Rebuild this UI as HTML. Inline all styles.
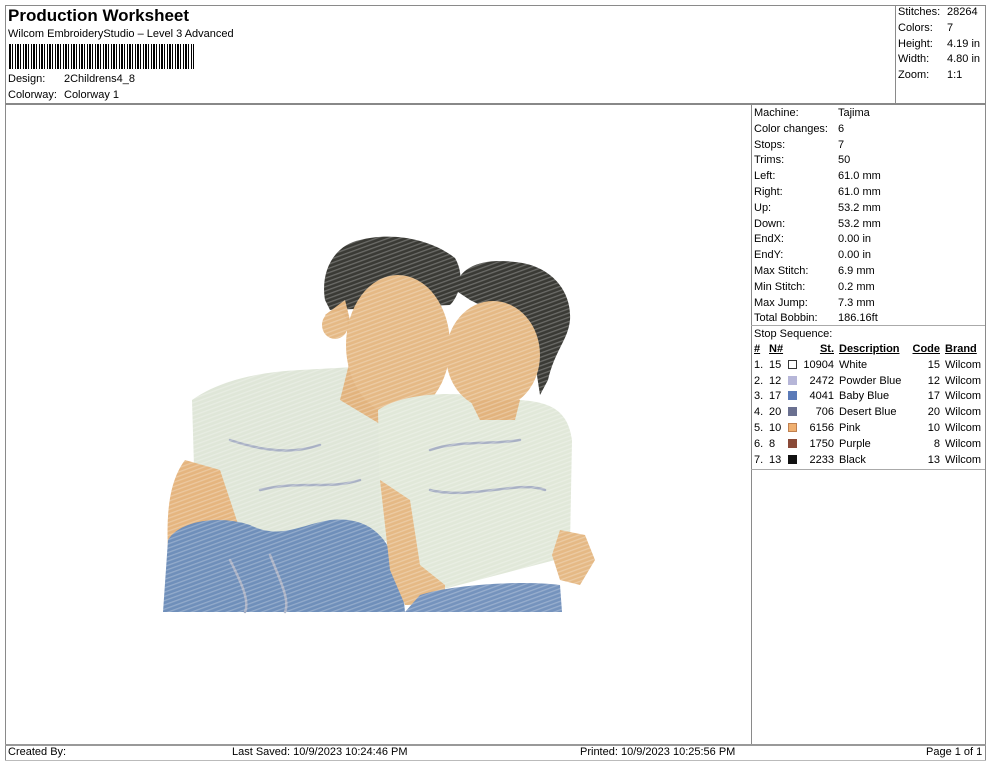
<!DOCTYPE html>
<html><head><meta charset="utf-8"><style>
*{margin:0;padding:0;box-sizing:border-box}
body{width:990px;height:762px;background:#fff;font-family:"Liberation Sans",Arial,sans-serif;font-size:11px;color:#000;position:relative;overflow:hidden}
.a{position:absolute;white-space:nowrap}
.l{position:absolute;background:#8a8a8a}
.r{position:absolute;line-height:15.8px}
u{text-decoration:underline;font-weight:bold}
.sw{display:inline-block;width:9px;height:9px;vertical-align:-1px}
</style></head><body>
<div class="l" style="left:5px;top:5px;width:981px;height:1px"></div>
<div class="l" style="left:5px;top:5px;width:1px;height:756px"></div>
<div class="l" style="left:985px;top:5px;width:1px;height:756px"></div>
<div class="l" style="left:5px;top:103px;width:981px;height:2px;background:#888"></div>
<div class="l" style="left:895px;top:5px;width:1px;height:98px"></div>
<div class="l" style="left:751px;top:104px;width:1px;height:641px"></div>
<div class="l" style="left:751px;top:325px;width:234px;height:1px;background:#aaa"></div>
<div class="l" style="left:751px;top:469px;width:234px;height:1px;background:#aaa"></div>
<div class="l" style="left:5px;top:744px;width:981px;height:2px;background:#999"></div>
<div class="l" style="left:5px;top:760px;width:981px;height:1px;background:#bbb"></div>

<div class="a" style="left:8px;top:6px;font-size:17px;font-weight:bold">Production Worksheet</div>
<div class="a" style="left:8px;top:28px">Wilcom EmbroideryStudio – Level 3 Advanced</div>
<div class="a" style="left:9px;top:44px;width:185px;height:25px;background:repeating-linear-gradient(90deg,#000 0 2px,#fff 2px 3px,#000 3px 4px,#fff 4px 6px,#000 6px 7px,#fff 7px 8px)"></div>
<div class="a" style="left:8px;top:73px">Design:</div><div class="a" style="left:64px;top:73px">2Childrens4_8</div>
<div class="a" style="left:8px;top:89px">Colorway:</div><div class="a" style="left:64px;top:89px">Colorway 1</div>

<div class="r" style="left:898px;top:5px">Stitches:<br>Colors:<br>Height:<br>Width:<br>Zoom:</div>
<div class="r" style="left:947px;top:5px">28264<br>7<br>4.19 in<br>4.80 in<br>1:1</div>

<div class="r" style="left:754px;top:106px">Machine:<br>Color changes:<br>Stops:<br>Trims:<br>Left:<br>Right:<br>Up:<br>Down:<br>EndX:<br>EndY:<br>Max Stitch:<br>Min Stitch:<br>Max Jump:<br>Total Bobbin:<br>Stop Sequence:</div>
<div class="r" style="left:838px;top:106px">Tajima<br>6<br>7<br>50<br>61.0 mm<br>61.0 mm<br>53.2 mm<br>53.2 mm<br>0.00 in<br>0.00 in<br>6.9 mm<br>0.2 mm<br>7.3 mm<br>186.16ft</div>

<div class="r" style="left:754px;top:342px">
<u>#</u><br>1.<br>2.<br>3.<br>4.<br>5.<br>6.<br>7.</div>
<div class="r" style="left:769px;top:342px"><u>N#</u><br>15<br>12<br>17<br>20<br>10<br>8<br>13</div>
<div class="r" style="left:788px;top:342px"><br>
<span class="sw" style="border:1px solid #333;background:#fff"></span><br>
<span class="sw" style="background:#b6b6d8"></span><br>
<span class="sw" style="background:#5a7ab8"></span><br>
<span class="sw" style="background:#6a7090"></span><br>
<span class="sw" style="background:#f0b070;border:1px solid #c08050"></span><br>
<span class="sw" style="background:#8a4a38"></span><br>
<span class="sw" style="background:#111"></span></div>
<div class="r" style="left:798px;top:342px;width:36px;text-align:right"><u>St.</u><br>10904<br>2472<br>4041<br>706<br>6156<br>1750<br>2233</div>
<div class="r" style="left:839px;top:342px"><u>Description</u><br>White<br>Powder Blue<br>Baby Blue<br>Desert Blue<br>Pink<br>Purple<br>Black</div>
<div class="r" style="left:908px;top:342px;width:32px;text-align:right"><u>Code</u><br>15<br>12<br>17<br>20<br>10<br>8<br>13</div>
<div class="r" style="left:945px;top:342px"><u>Brand</u><br>Wilcom<br>Wilcom<br>Wilcom<br>Wilcom<br>Wilcom<br>Wilcom<br>Wilcom</div>

<div class="a" style="left:8px;top:746px">Created By:</div>
<div class="a" style="left:232px;top:746px">Last Saved: 10/9/2023 10:24:46 PM</div>
<div class="a" style="left:580px;top:746px">Printed: 10/9/2023 10:25:56 PM</div>
<div class="a" style="left:926px;top:746px">Page 1 of 1</div>

<svg class="a" style="left:0;top:0" width="990" height="762">
<defs>
<pattern id="st" width="4" height="4" patternUnits="userSpaceOnUse" patternTransform="rotate(-20)"><rect width="4" height="1.3" fill="#fff" opacity=".25"/></pattern>
</defs>
<path d="M325 300 C320 270 335 245 360 240 C390 232 430 238 455 258 C465 275 460 295 450 305 L330 310Z" fill="#3a3a35"/>
<path d="M455 290 C458 265 485 258 515 262 C550 265 572 290 570 320 C568 340 555 350 548 380 L540 395 L530 330 L470 300Z" fill="#3a3a35"/>
<path d="M192 400 C220 380 260 372 300 370 L390 365 L410 400 L400 540 L240 550 L195 500Z" fill="#dfe6d8"/>
<path d="M185 460 L220 470 L240 530 L168 550 C166 510 170 480 185 460Z" fill="#e5b57f"/>
<path d="M325 315 L345 300 L355 340 L340 400 L390 430 L420 410 L400 370Z" fill="#e2b37d"/>
<ellipse cx="398" cy="345" rx="52" ry="70" fill="#e5b985"/>
<ellipse cx="335" cy="325" rx="13" ry="14" fill="#e5b985"/>
<path d="M168 540 C180 520 220 515 250 525 C280 540 300 525 330 520 C380 515 400 550 405 612 L163 612Z" fill="#6f8fba"/>
<path d="M378 410 C400 395 440 392 470 395 L520 400 C550 402 568 410 572 440 L570 545 L555 560 L440 590 L400 590 L380 520Z" fill="#e1e8d9"/>
<ellipse cx="493" cy="355" rx="47" ry="54" fill="#e5b985"/>
<path d="M470 400 L520 400 L515 420 L480 420Z" fill="#e2b37d"/>
<path d="M380 480 L410 500 L420 565 L445 585 L445 605 L405 605 L390 570 Z" fill="#e5b985"/>
<path d="M560 530 L585 535 L595 560 L580 585 L560 580 L552 555Z" fill="#e5b985"/>
<path d="M420 595 C450 585 520 580 560 585 L562 612 L405 612Z" fill="#7593bd"/>
<g stroke="#a8b0c4" stroke-width="2.5" fill="none" stroke-linecap="round">
<path d="M230 440 C260 450 290 455 320 445"/><path d="M260 490 C300 480 330 490 360 480"/>
<path d="M430 450 C460 440 490 445 520 440"/><path d="M430 490 C470 500 520 480 545 490"/>
<path d="M230 560 C240 580 250 600 245 612"/><path d="M270 555 C280 580 290 600 285 612"/>
</g>
<rect x="160" y="235" width="440" height="380" fill="url(#st)"/>
</svg>
</body></html>
